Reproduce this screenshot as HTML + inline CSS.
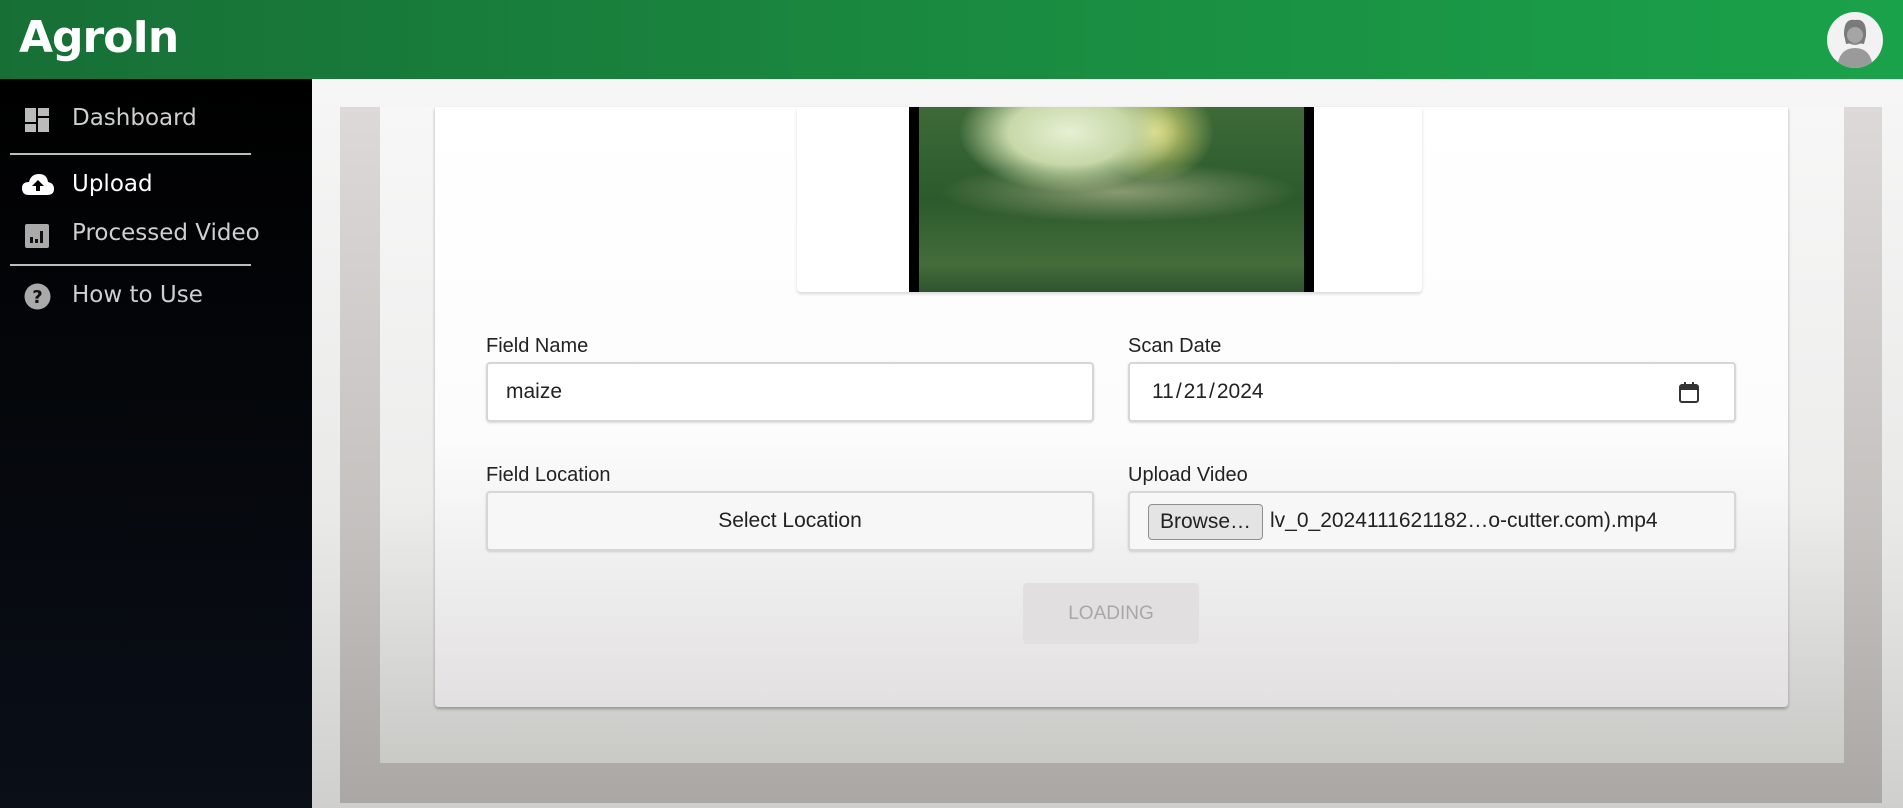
<!DOCTYPE html>
<html><head><meta charset="utf-8"><style>
*{box-sizing:border-box;margin:0;padding:0}
body{width:1903px;height:808px;overflow:hidden;position:relative;font-family:"Liberation Sans",sans-serif;background:#f3f3f2}
.hdr{position:absolute;left:0;top:0;width:1903px;height:79px;background:linear-gradient(90deg,#176f36,#1a8a40 50%,#1aa24a)}
.logo{position:absolute;left:19px;top:12px;font-family:"DejaVu Sans",sans-serif;font-weight:bold;font-size:44px;color:#fff;letter-spacing:-1px}
.av{position:absolute;left:1827px;top:12px;width:56px;height:56px;border-radius:50%;background:#f2f2f2;overflow:hidden}
.side{position:absolute;left:0;top:79px;width:312px;height:729px;background:linear-gradient(#000,#0a0f18)}
.nav{position:absolute;left:72px;font-family:"DejaVu Sans",sans-serif;font-size:23px;color:#cfcfcf}
.ic{position:absolute;left:24px}
.div{position:absolute;left:10px;width:241px;height:2px;background:#bdbdbd}
.main{position:absolute;left:312px;top:79px;width:1591px;height:729px;background:linear-gradient(#f6f6f6,#e9eae8 60%,#cfd0ce)}
.outer{position:absolute;left:340px;top:107px;width:1542px;height:696px;background:linear-gradient(#dcd9d8,#c4c1bf 60%,#aaa7a4)}
.inner{position:absolute;left:380px;top:107px;width:1464px;height:656px;background:linear-gradient(#f7f7f7,#ededec 60%,#c9cac6)}
.card{position:absolute;left:435px;top:107px;width:1353px;height:600px;background:linear-gradient(#fff 0%,#fcfcfc 55%,#e2e0e0);box-shadow:0 2px 3px rgba(0,0,0,.3);border-radius:0 0 4px 4px}
.imgc{position:absolute;left:797px;top:107px;width:625px;height:185px;background:#fff;box-shadow:0 2px 3px rgba(0,0,0,.15);border-radius:0 0 4px 4px}
.img{position:absolute;left:909px;top:107px;width:405px;height:185px;background:#000}
.lbl{position:absolute;font-size:20px;color:#222}
.inp{position:absolute;height:60px;width:608px;border:2px solid #d6d6d6;border-radius:4px;background:#fff;box-shadow:0 1px 2px rgba(0,0,0,.15);font-size:21px;color:#222}
</style></head><body>
<div class="hdr"><div class="logo">AgroIn</div>
<div class="av"><svg width="56" height="56" viewBox="0 0 56 56"><circle cx="28" cy="22" r="11" fill="#8e8e8e"/><path d="M17 22 Q17 6 28 8 Q40 6 39 24 L37 32 Q28 30 19 32Z" fill="#7a7a7a"/><circle cx="28" cy="23" r="8" fill="#a5a5a5"/><path d="M10 56 Q12 36 28 36 Q44 36 46 56Z" fill="#9a9a9a"/></svg></div></div>
<div class="side">
<svg class="ic" style="top:28px" width="26" height="26" viewBox="0 0 26 26"><rect x="1" y="1" width="11" height="14" fill="#bbb"/><rect x="14" y="1" width="11" height="8" fill="#bbb"/><rect x="14" y="11" width="11" height="14" fill="#bbb"/><rect x="1" y="17" width="11" height="8" fill="#bbb"/></svg>
<div class="nav" style="top:26px">Dashboard</div>
<div class="div" style="top:74px"></div>
<svg class="ic" style="top:94px;left:21px" width="34" height="24" viewBox="0 0 34 24"><path d="M8 22 Q1 22 1 15 Q1 9 8 9 Q10 1 18 1 Q26 1 27 9 Q33 10 33 16 Q33 22 26 22Z" fill="#fff"/><path d="M17 7 L23 13 L19 13 L19 18 L15 18 L15 13 L11 13Z" fill="#000"/></svg>
<div class="nav" style="top:92px;color:#fff">Upload</div>
<svg class="ic" style="top:144px" width="26" height="26" viewBox="0 0 26 26"><rect x="1" y="1" width="24" height="24" rx="2" fill="#aaa"/><rect x="6" y="14" width="3" height="6" fill="#111"/><rect x="11" y="16" width="3" height="4" fill="#111"/><rect x="16" y="8" width="3" height="12" fill="#111"/></svg>
<div class="nav" style="top:141px">Processed Video</div>
<div class="div" style="top:185px"></div>
<svg class="ic" style="top:204px" width="27" height="27" viewBox="0 0 27 27"><circle cx="13.5" cy="13.5" r="13" fill="#aaa"/><text x="13.5" y="20" text-anchor="middle" font-family="DejaVu Sans" font-weight="bold" font-size="18" fill="#111">?</text></svg>
<div class="nav" style="top:203px">How to Use</div>
</div>
<div class="main"></div>
<div class="outer"></div>
<div class="inner"></div>
<div class="card"></div>
<div class="imgc"></div>
<div class="img"><div style="position:absolute;left:10px;top:0;width:385px;height:185px;background:radial-gradient(ellipse 110px 60px at 150px 25px,#e6f0d4 0%,#c8d8a8 55%,transparent 100%),radial-gradient(ellipse 60px 50px at 235px 25px,#e8e27a,transparent),radial-gradient(ellipse 180px 30px at 200px 85px,#8a9a70,transparent),linear-gradient(#3e6a38,#2c5a2c 50%,#446c3a 85%,#2e5430)"></div></div>
<div class="lbl" style="left:486px;top:335px">Field Name</div>
<div class="lbl" style="left:1128px;top:335px">Scan Date</div>
<div class="inp" style="left:486px;top:362px"><span style="position:absolute;left:18px;top:16px">maize</span></div>
<div class="inp" style="left:1128px;top:362px"><span style="position:absolute;left:22px;top:16px">11<span style="margin:0 2px">/</span>21<span style="margin:0 2px">/</span>2024</span>
<svg style="position:absolute;right:34px;top:17px" width="22" height="23" viewBox="0 0 22 23"><rect x="2" y="4" width="18" height="17" rx="2" fill="none" stroke="#333" stroke-width="2"/><rect x="2" y="4" width="18" height="5" fill="#333"/><rect x="6" y="1" width="2" height="4" fill="#333"/><rect x="14" y="1" width="2" height="4" fill="#333"/></svg></div>
<div class="lbl" style="left:486px;top:464px">Field Location</div>
<div class="lbl" style="left:1128px;top:464px">Upload Video</div>
<div class="inp" style="left:486px;top:491px;background:#f7f7f7;text-align:center;line-height:56px;font-size:21px">Select Location</div>
<div class="inp" style="left:1128px;top:491px;background:#f7f7f7"><span style="position:absolute;left:18px;top:11px;width:115px;height:36px;border:1px solid #8f8f8f;border-radius:4px;background:#e4e4e4;text-align:center;line-height:34px">Browse…</span><span style="position:absolute;left:140px;top:16px">lv_0_2024111621182…o-cutter.com).mp4</span></div>
<div style="position:absolute;left:1023px;top:583px;width:176px;height:61px;background:#e2dfe1;border-radius:4px;color:#a8a8a8;font-size:19px;text-align:center;line-height:61px">LOADING</div>
</body></html>
